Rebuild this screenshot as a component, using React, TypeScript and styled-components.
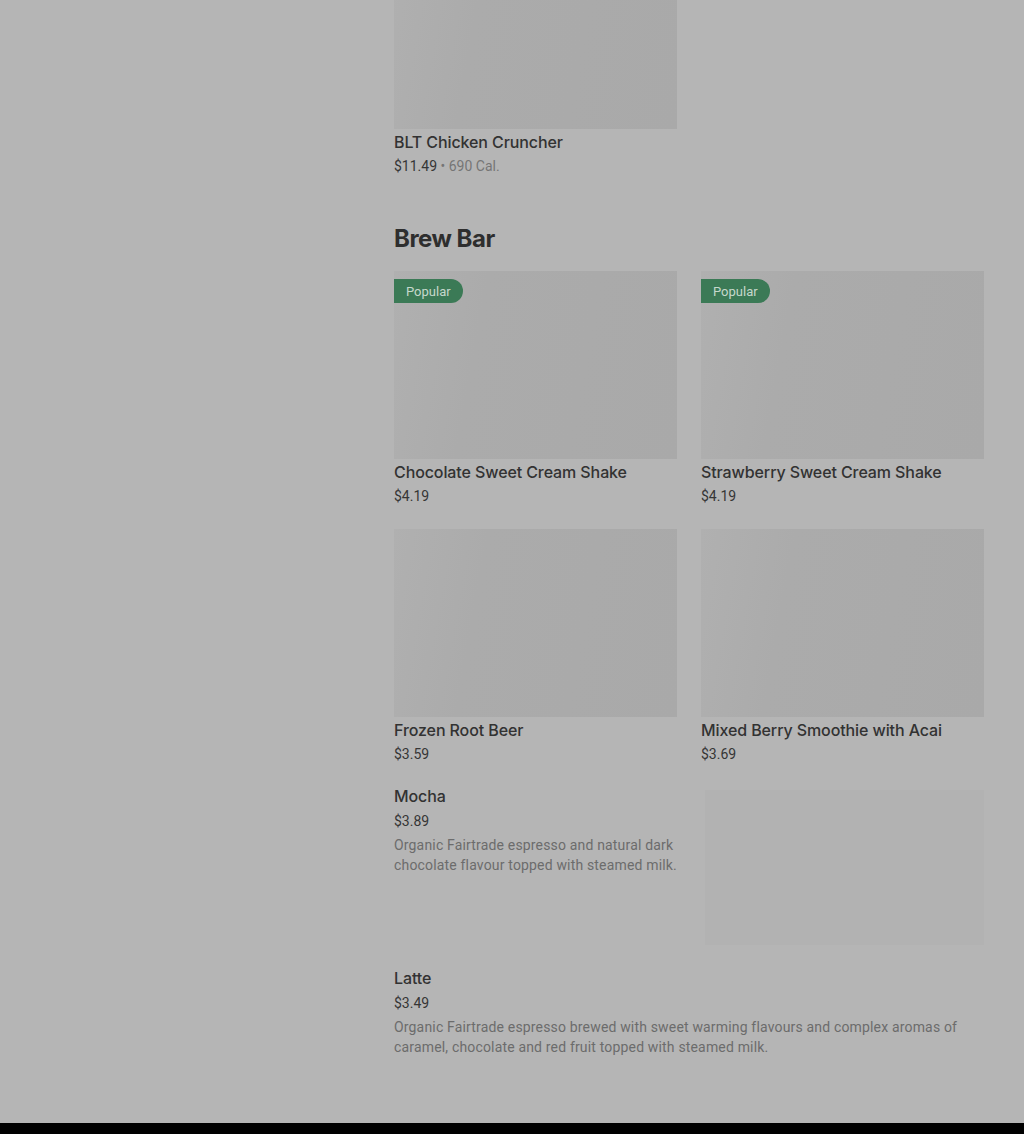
import React from "react";
import styled, { createGlobalStyle } from "styled-components";

interface IItem {
  name: string;
  price: string;
  calories?: string;
  description?: string;
  popular?: boolean;
  image?: boolean;
}

const topItem: IItem = { name: "BLT Chicken Cruncher", price: "$11.49", calories: "690 Cal." };

const brewCards: IItem[] = [
  { name: "Chocolate Sweet Cream Shake", price: "$4.19", popular: true },
  { name: "Strawberry Sweet Cream Shake", price: "$4.19", popular: true },
  { name: "Frozen Root Beer", price: "$3.59" },
  { name: "Mixed Berry Smoothie with Acai", price: "$3.69" },
];

const brewList: IItem[] = [
  {
    name: "Mocha",
    price: "$3.89",
    description: "Organic Fairtrade espresso and natural dark chocolate flavour topped with steamed milk.",
    image: true,
  },
  {
    name: "Latte",
    price: "$3.49",
    description:
      "Organic Fairtrade espresso brewed with sweet warming flavours and complex aromas of caramel, chocolate and red fruit topped with steamed milk.",
  },
];

const GlobalStyle = createGlobalStyle`
  html, body {
    margin: 0;
    padding: 0;
    background: #b5b5b5;
    font-family: Inter, "Noto Sans", sans-serif;
    overflow: hidden;
  }
  * {
    box-sizing: border-box;
  }
`;

const ItemCard: React.FC<{ item: IItem }> = ({ item }) => (
  <Card>
    <ImageBox>{item.popular && <Badge>Popular</Badge>}</ImageBox>
    <ItemName>{item.name}</ItemName>
    <PriceLine>
      {item.price}
      {item.calories && <Calories> • {item.calories}</Calories>}
    </PriceLine>
  </Card>
);

const ListItem: React.FC<{ item: IItem }> = ({ item }) => (
  <Row>
    <RowText>
      <ItemName>{item.name}</ItemName>
      <PriceLine $gap={3}>{item.price}</PriceLine>
      <Description>{item.description}</Description>
    </RowText>
    {item.image && <RowImage />}
  </Row>
);

export default function App() {
  return (
    <>
      <GlobalStyle />
      <Page>
        <Sidebar />
        <Content>
          <CardGrid>
            <ItemCard item={topItem} />
          </CardGrid>
          <Section>
            <SectionTitle>Brew Bar</SectionTitle>
            <CardGrid>
              {brewCards.map((item) => (
                <ItemCard key={item.name} item={item} />
              ))}
            </CardGrid>
            <List>
              {brewList.map((item) => (
                <ListItem key={item.name} item={item} />
              ))}
            </List>
          </Section>
        </Content>
      </Page>
      <Footer />
    </>
  );
}

const Page = styled.div`
  display: flex;
  height: 1123px;
  overflow: hidden;
`;

const Sidebar = styled.aside`
  flex: 0 0 394px;
`;

const Content = styled.main`
  width: 590px;
  margin-top: -59px;
  display: flex;
  flex-direction: column;
`;

const Section = styled.section`
  margin-top: 47px;
  display: flex;
  flex-direction: column;
`;

const SectionTitle = styled.h2`
  margin: 0 0 16px;
  font-size: 24px;
  line-height: 32px;
  font-weight: 700;
  letter-spacing: -0.5px;
  color: #2e2e2e;
`;

const CardGrid = styled.div`
  display: grid;
  grid-template-columns: repeat(2, 283px);
  column-gap: 24px;
  row-gap: 23px;
`;

const Card = styled.div`
  display: flex;
  flex-direction: column;
`;

const ImageBox = styled.div`
  position: relative;
  height: 188px;
  background: linear-gradient(100deg, #b0b0b0 0%, #ababab 30%, #a9a9a9 100%);
`;

const Badge = styled.span`
  position: absolute;
  top: 8px;
  left: 0;
  height: 24px;
  padding: 0 12px;
  display: flex;
  align-items: center;
  border-radius: 0 12px 12px 0;
  background: #3b7a56;
  color: #c6d8cc;
  font-family: Roboto, "Noto Sans", sans-serif;
  font-size: 13px;
`;

const ItemName = styled.div`
  margin-top: 1px;
  font-size: 16px;
  line-height: 24px;
  font-weight: 500;
  letter-spacing: -0.1px;
  color: #323232;
`;

const PriceLine = styled.div<{ $gap?: number }>`
  margin-top: ${(props) => props.$gap ?? 2}px;
  font-family: Roboto, "Noto Sans", sans-serif;
  font-size: 14px;
  line-height: 20px;
  color: #363636;
`;

const Calories = styled.span`
  color: #757575;
`;

const List = styled.div`
  margin-top: 19px;
  display: flex;
  flex-direction: column;
  gap: 20px;
`;

const Row = styled.div`
  display: flex;
  gap: 16px;
`;

const RowText = styled.div`
  flex: 1;
  display: flex;
  flex-direction: column;
`;

const Description = styled.p`
  margin: 4px 0 0;
  font-family: Roboto, "Noto Sans", sans-serif;
  font-size: 14px;
  line-height: 20px;
  letter-spacing: 0.17px;
  color: #6c6c6c;
`;

const RowImage = styled.div`
  flex: 0 0 279px;
  height: 155px;
  margin-top: 7px;
  background: #b2b2b2;
`;

const Footer = styled.footer`
  height: 11px;
  background: #000;
`;
